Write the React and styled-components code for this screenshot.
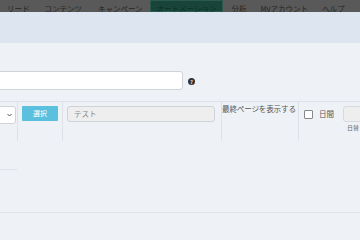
import styled, { createGlobalStyle } from 'styled-components';

const Global = createGlobalStyle`
    html, body {
        margin: 0;
        padding: 0;
        background: #eef2f7;
        font-family: "Noto Sans CJK JP", "Noto Sans", sans-serif;
        overflow: hidden;
    }
`

const Nav = styled.div`
    display: flex;
    height: 12px;
    overflow: hidden;
    background: #595959;
    `
const NavItem = styled.div`
    padding: 3px 7px 0;
    margin-right: ${p => p.gap || 0}px;
    font-size: 7.5px;
    line-height: 12px;
    white-space: nowrap;
    color: ${p => p.active ? '#0f2f28' : '#262626'};
    background: ${p => p.active ? '#18443a' : 'transparent'};
    box-shadow: ${p => p.active ? 'inset 0 0 0 1px #2a5a4e' : 'none'};
    `
const Header = styled.div`
    height: 31px;
    background: #dce5f0;
    `
const Body = styled.div`
    padding-top: 28px;
    `
const Content = styled.div`
    margin-left: -40px;
    `
const FormRow = styled.div`
    display: flex;
    align-items: center;
    gap: 4px;
    `
const TextInput = styled.div`
    width: 221px;
    height: 17px;
    background: #fff;
    border: 1px solid #cfd3d8;
    border-radius: 3px;
    `
const Help = styled.div`
    width: 7px;
    height: 7px;
    border-radius: 50%;
    background: #333;
    color: #fff;
    font-size: 5px;
    font-weight: bold;
    line-height: 7px;
    text-align: center;
    margin-left: 1px;
    margin-top: 2px;
    `
const Table = styled.div`
    margin-top: 11px;
    border-top: 1px solid #dde2e8;
    display: flex;
    height: 39px;
    `
const Cell = styled.div`
    width: ${p => p.w}px;
    flex-shrink: 0;
    box-sizing: border-box;
    border-left: ${p => p.first ? 'none' : '1px solid #dde2e8'};
    padding: ${p => p.pad || '4px 0 0 4px'};
    `
const Select = styled.div`
    margin-left: 12px;
    width: 39px;
    height: 16px;
    background: #fff;
    border: 1px solid #cfd3d8;
    border-radius: 3px;
    display: flex;
    justify-content: flex-end;
    align-items: center;
    padding-right: 3px;
    box-sizing: content-box;
    `
const Button = styled.div`
    width: 36px;
    height: 15px;
    background: #5bc0de;
    color: #fff;
    font-size: 7px;
    line-height: 15px;
    text-align: center;
    border-radius: 1px;
    `
const Disabled = styled.div`
    width: 140px;
    height: 14px;
    background: #eeeeee;
    border: 1px solid #cfd3d8;
    border-radius: 3px;
    color: #8a8a8a;
    font-size: 7.5px;
    line-height: 14px;
    padding-left: 6px;
    box-sizing: content-box;
    `
const Label = styled.div`
    font-size: 7.6px;
    color: #555;
    white-space: nowrap;
    line-height: 12px;
    letter-spacing: -0.2px;
    `
const Box = styled.div`
    flex: 1;
    border-left: 1px solid #dde2e8;
    display: flex;
    align-items: flex-start;
    padding: 4px 0 0 5px;
    `
const Check = styled.div`
    width: 7px;
    height: 7px;
    margin-top: 4px;
    background: #fff;
    border: 1px solid #888;
    border-radius: 1px;
    flex-shrink: 0;
    `
const CheckLabel = styled.div`
    font-size: 7.5px;
    color: #555;
    line-height: 16px;
    margin-left: 6px;
    width: 24px;
    `
const DayWrap = styled.div`
    display: flex;
    flex-direction: column;
    `
const DayInput = styled.div`
    width: 40px;
    height: 14px;
    background: #eeeeee;
    border: 1px solid #d6d9dd;
    border-radius: 3px;
    `
const Hint = styled.div`
    font-size: 6px;
    color: #666;
    margin-left: 4px;
    margin-top: 1px;
    line-height: 9px;
    `
const ShortLine = styled.div`
    width: 57px;
    margin-top: 28px;
    border-top: 1px solid #dde2e8;
    `
const Divider = styled.div`
    margin-top: 42px;
    border-top: 1px solid #e1e5ea;
    `

const navItems = [
    { label: 'リード', gap: 1 },
    { label: 'コンテンツ', gap: 2 },
    { label: 'キャンペーン', gap: 0 },
    { label: 'オートメーション', active: true, gap: 1 },
    { label: '分析', gap: 0 },
    { label: 'Myアカウント', gap: 0 },
    { label: 'ヘルプ' },
]

export default function App() {
    return (
        <>
            <Global />
            <Nav>
                {navItems.map(item => (
                    <NavItem key={item.label} active={item.active} gap={item.gap}>{item.label}</NavItem>
                ))}
            </Nav>
            <Header />
            <Body>
                <Content>
                    <FormRow>
                        <TextInput />
                        <Help>?</Help>
                    </FormRow>
                    <Table>
                        <Cell w={57} first pad="4px 0 0 0">
                            <Select>
                                <svg width="5" height="4" viewBox="0 0 10 8">
                                    <path d="M1 2 L5 6 L9 2" fill="none" stroke="#555" strokeWidth="2" />
                                </svg>
                            </Select>
                        </Cell>
                        <Cell w={45}>
                            <Button>選択</Button>
                        </Cell>
                        <Cell w={159}>
                            <Disabled>テスト</Disabled>
                        </Cell>
                        <Cell w={77} pad="1px 0 0 0">
                            <Label>最終ページを表示する</Label>
                        </Cell>
                        <Box>
                            <Check />
                            <CheckLabel>日間</CheckLabel>
                            <DayWrap>
                                <DayInput />
                                <Hint>日替</Hint>
                            </DayWrap>
                        </Box>
                    </Table>
                    <ShortLine />
                    <Divider />
                </Content>
            </Body>
        </>
    )
}
